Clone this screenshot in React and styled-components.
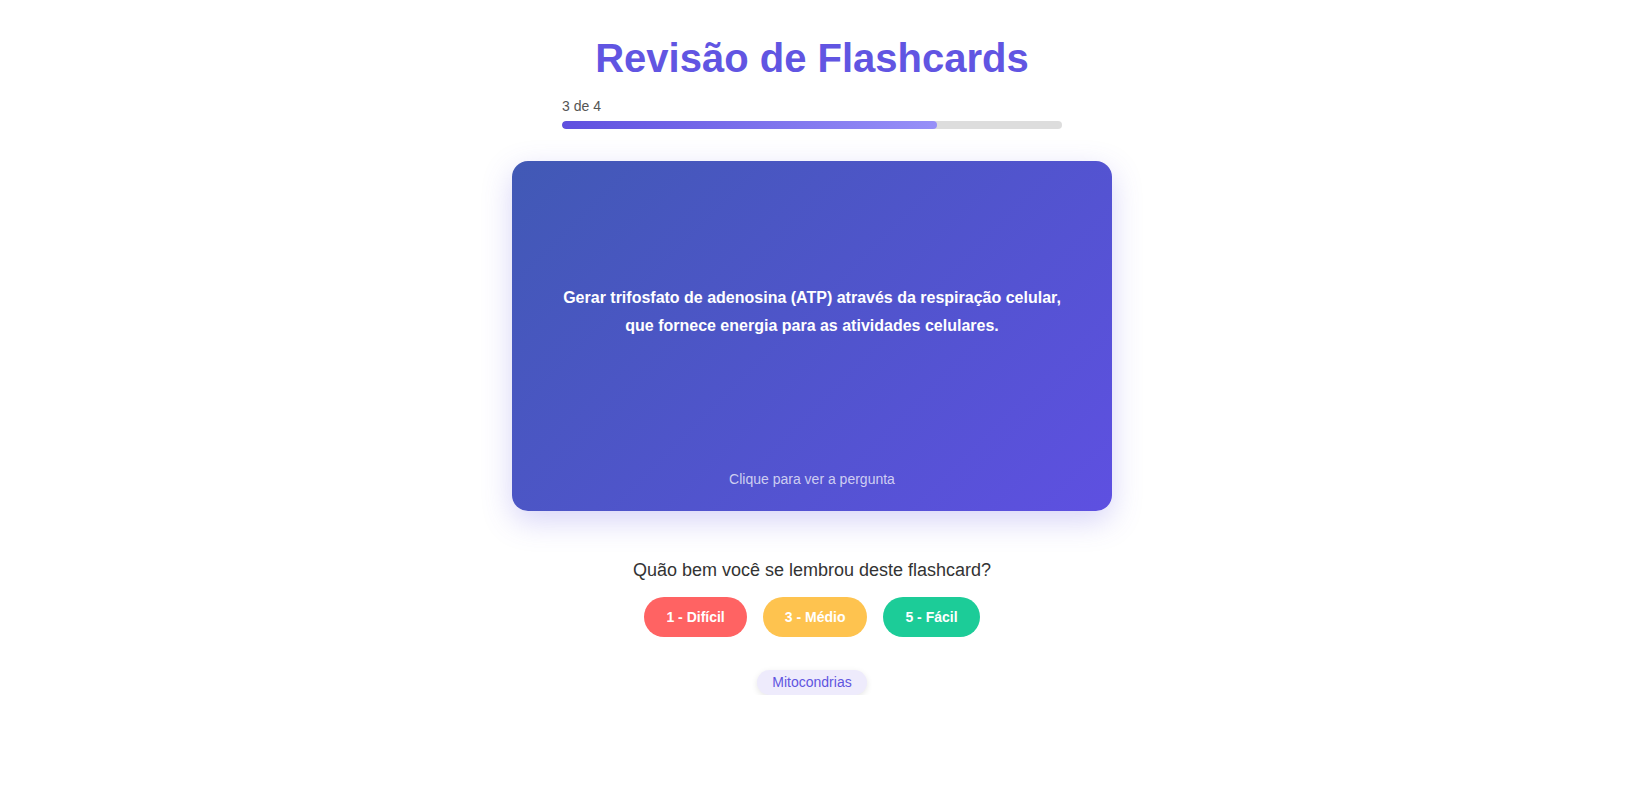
import React, { useState } from 'react';
import styled, { createGlobalStyle } from 'styled-components';

const GlobalStyle = createGlobalStyle`
  * {
    box-sizing: border-box;
  }

  body {
    margin: 0;
    background: #ffffff;
    font-family: 'Liberation Sans', Arial, sans-serif;
    color: #333333;
  }
`;

const Page = styled.div`
  display: flex;
  flex-direction: column;
  align-items: center;
  padding: 34px 4px 0 0;
`;

const Title = styled.h1`
  margin: 0 0 14px;
  font-size: 40px;
  line-height: 48px;
  font-weight: 700;
  color: #6155e2;
`;

const Progress = styled.div`
  width: 500px;
  margin-bottom: 32px;
`;

const ProgressLabel = styled.div`
  font-size: 14px;
  line-height: 20px;
  color: #555555;
  margin-bottom: 5px;
`;

const Track = styled.div`
  height: 8px;
  border-radius: 4px;
  background: #dddddd;
  overflow: hidden;
`;

const Fill = styled.div`
  height: 100%;
  border-radius: 4px;
  background: linear-gradient(90deg, #5f4fdf, #9790f8);
`;

const Card = styled.div`
  width: 600px;
  height: 350px;
  border-radius: 16px;
  padding: 24px 32px 22px;
  display: flex;
  flex-direction: column;
  background: linear-gradient(135deg, #4159b5 0%, #5e50e1 100%);
  box-shadow: 0 10px 30px rgba(97, 85, 226, 0.25);
  cursor: pointer;
  color: #ffffff;
`;

const CardBody = styled.div`
  flex: 1;
  display: flex;
  align-items: center;
  justify-content: center;
  text-align: center;
  font-size: 16px;
  line-height: 28px;
  font-weight: 700;
  padding: 0 12px;
`;

const Hint = styled.div`
  margin-top: 30px;
  text-align: center;
  font-size: 14px;
  line-height: 20px;
  color: rgba(255, 255, 255, 0.72);
`;

const Question = styled.p`
  margin: 46px 0 14px;
  font-size: 18px;
  line-height: 26px;
  color: #333333;
`;

const Buttons = styled.div`
  display: flex;
  gap: 16px;
`;

const RateButton = styled.button`
  border: none;
  border-radius: 20px;
  padding: 10px 22px;
  font-family: inherit;
  font-size: 14px;
  line-height: 20px;
  font-weight: 700;
  color: #ffffff;
  background: ${(props) => props.color};
  cursor: pointer;
`;

const Tag = styled.span`
  margin-top: 33px;
  padding: 4px 15px;
  border-radius: 13px;
  font-size: 14px;
  line-height: 17px;
  color: #5f55e0;
  background: #eeebfc;
  box-shadow: 0 2px 6px rgba(0, 0, 0, 0.1);
`;

const cards = [
  { q: 'O que é a mitocôndria?', a: 'A organela responsável pela respiração celular.' },
  { q: 'Onde ocorre o ciclo de Krebs?', a: 'Na matriz mitocondrial.' },
  {
    q: 'Qual é a função principal das mitocôndrias?',
    a: 'Gerar trifosfato de adenosina (ATP) através da respiração celular, que fornece energia para as atividades celulares.',
  },
  { q: 'O que são as cristas mitocondriais?', a: 'Dobras da membrana interna.' },
];

const ratings = [
  { label: '1 - Difícil', color: '#ff6363' },
  { label: '3 - Médio', color: '#fec34f' },
  { label: '5 - Fácil', color: '#1ccc98' },
];

const App = () => {
  const [index] = useState(2);
  const [showAnswer, setShowAnswer] = useState(true);
  const card = cards[index];
  const pct = ((index + 1) / cards.length) * 100;

  return (
    <Page>
      <GlobalStyle />
      <Title>Revisão de Flashcards</Title>
      <Progress>
        <ProgressLabel>
          {index + 1} de {cards.length}
        </ProgressLabel>
        <Track>
          <Fill style={{ width: `${pct}%` }} />
        </Track>
      </Progress>
      <Card onClick={() => setShowAnswer(!showAnswer)}>
        <CardBody>{showAnswer ? card.a : card.q}</CardBody>
        <Hint>{showAnswer ? 'Clique para ver a pergunta' : 'Clique para ver a resposta'}</Hint>
      </Card>
      <Question>Quão bem você se lembrou deste flashcard?</Question>
      <Buttons>
        {ratings.map((r) => (
          <RateButton key={r.label} color={r.color}>
            {r.label}
          </RateButton>
        ))}
      </Buttons>
      <Tag>Mitocondrias</Tag>
    </Page>
  );
};

export default App;
